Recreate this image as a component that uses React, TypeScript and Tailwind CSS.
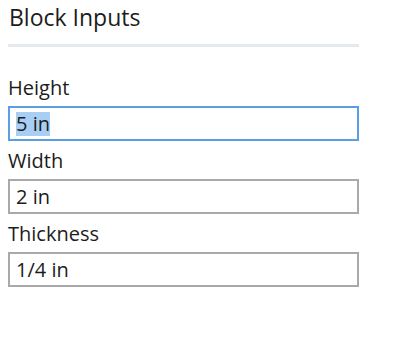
import React from 'react';

const fields = [
    { label: 'Height', value: '5 in', focused: true },
    { label: 'Width', value: '2 in', focused: false },
    { label: 'Thickness', value: '1/4 in', focused: false },
];

const App: React.FC = () => {
    return (
        <div className="w-[398px] h-[340px] bg-white px-2 pt-[5px] text-[#1c1c1c]" style={{ fontFamily: '"Open Sans", Lato, sans-serif' }}>
            <div className="w-[351px]">
                <h2 className="text-[23px] leading-[24px] pl-px">Block Inputs</h2>
                <div className="mt-[15px] h-[3px] bg-[#e3e9ef]" />
                <div className="mt-[30px] flex flex-col">
                    {fields.map((f, i) => (
                        <div key={f.label} className={i > 0 ? 'mt-[9px]' : ''}>
                            <div className="text-[20px] leading-[22px]">{f.label}</div>
                            <div
                                className={`mt-[7px] h-[35px] border-2 px-[6px] flex items-center text-[20px] ${
                                    f.focused ? 'border-[#5b9ee3]' : 'border-[#a9a9a9]'
                                }`}
                            >
                                <span className={f.focused ? 'bg-[#a8cff3] leading-[24px]' : 'leading-[24px]'}>{f.value}</span>
                            </div>
                        </div>
                    ))}
                </div>
            </div>
        </div>
    );
};

export default App;
